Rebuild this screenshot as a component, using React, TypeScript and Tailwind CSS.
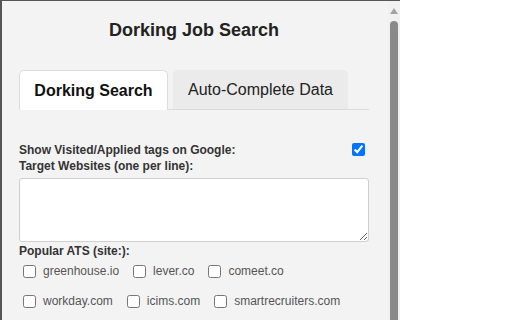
import React from 'react';

const sites = [
  'greenhouse.io',
  'lever.co',
  'comeet.co',
  'workday.com',
  'icims.com',
  'smartrecruiters.com',
];

function Scrollbar() {
  return (
    <div className="w-[12px] h-full bg-[#f1f1f1] flex flex-col items-center">
      {/* up arrow */}
      <svg width="8" height="6" viewBox="0 0 8 6" className="mt-[7px]">
        <polygon points="4,0 8,6 0,6" fill="#a3a3a3" />
      </svg>
      <div className="mt-[7px] w-[8px] flex-1 bg-[#8a8a8a] rounded-t-[4px]" />
    </div>
  );
}

export default function App() {
  return (
    <div
      className="w-[512px] h-[320px] bg-white flex overflow-hidden"
      style={{ fontFamily: '"Liberation Sans", Arial, sans-serif' }}
    >
      <div className="flex h-full border-t border-l-2 border-[#555555]">
        <div className="w-[386px] h-full bg-[#f3f3f3] pl-[17px]">
          <div className="w-[350px]">
            {/* Title */}
            <h1 className="pt-[19px] text-[18px] leading-[21px] font-bold text-[#222] text-center">
              Dorking Job Search
            </h1>

            {/* Tabs */}
            <div className="mt-[29px] flex items-end gap-[5px] border-b border-[#dcdcdc] h-[40px]">
              <div className="w-[149px] h-[40px] -mb-px flex items-center justify-center bg-white border border-b-0 border-[#dcdcdc] rounded-t-[5px] text-[16px] font-bold text-[#111] whitespace-nowrap">
                Dorking Search
              </div>
              <div className="w-[175px] h-[39px] flex items-center justify-center bg-[#ebebeb] rounded-t-[5px] text-[16px] text-[#222] whitespace-nowrap">
                Auto-Complete Data
              </div>
            </div>

            {/* Content */}
            <div className="mt-[33px] flex items-center justify-between h-[13px]">
              <span className="text-[12px] leading-[14px] font-bold text-[#333]">
                Show Visited/Applied tags on Google:
              </span>
              <input type="checkbox" defaultChecked className="w-[13px] h-[13px] mr-[4px] accent-[#0075ff]" />
            </div>

            <div className="mt-[3px] text-[12px] leading-[14px] font-bold text-[#333]">
              Target Websites (one per line):
            </div>

            <textarea className="mt-[5px] block w-[350px] h-[64px] bg-white border border-[#cfcfcf] rounded-[3px] outline-none" />

            <div className="mt-[2px] text-[12px] leading-[14px] font-bold text-[#333]">
              Popular ATS (site:):
            </div>

            <div className="mt-[7px] flex flex-wrap gap-y-[17px]">
              {sites.map((s) => (
                <label key={s} className="flex items-center mr-[10px] text-[12px] leading-[13px] text-[#555]">
                  <input type="checkbox" className="w-[13px] h-[13px] ml-[4px] mr-[3px]" />
                  <span className="pl-[4px]">{s}</span>
                </label>
              ))}
            </div>
          </div>
        </div>
        <Scrollbar />
      </div>
      <div className="flex-1" />
    </div>
  );
}
